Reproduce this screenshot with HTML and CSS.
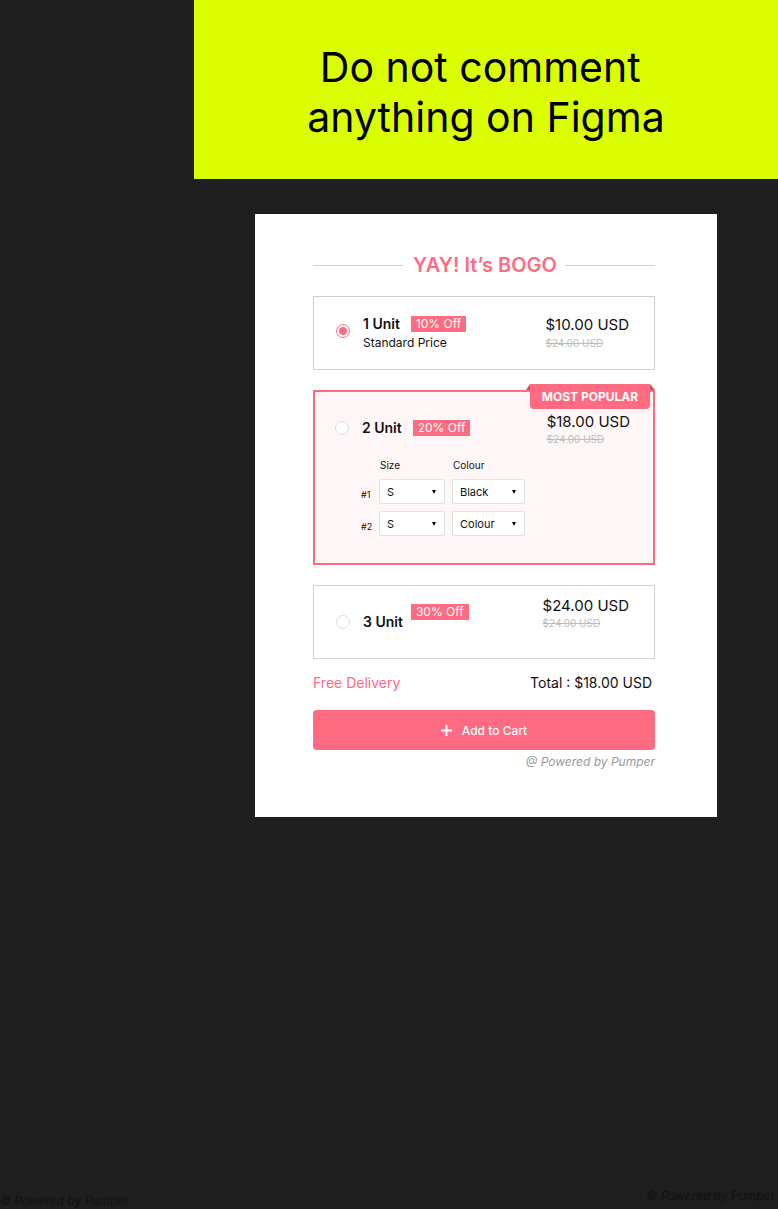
FILE: index.html
```html
<!DOCTYPE html>
<html lang="en">
<head>
<meta charset="UTF-8">
<meta name="viewport" content="width=device-width, initial-scale=1.0">
<title>BOGO Offer</title>
<link rel="stylesheet" href="styles.css">
</head>
<body>

<div class="canvas">
  <div class="note">
    <p>Do not comment&nbsp;<br>anything on Figma</p>
  </div>

  <div class="offer-card">
    <div class="offer-title">
      <span class="rule"></span>
      <h2>YAY! It’s BOGO</h2>
      <span class="rule"></span>
    </div>

    <div class="option option-one">
      <div class="option-left">
        <span class="radio checked"></span>
        <div class="option-info">
          <div class="name-row"><span class="unit">1 Unit</span><span class="badge">10% Off</span></div>
          <div class="sub">Standard Price</div>
        </div>
      </div>
      <div class="price">
        <div class="now">$10.00 USD</div>
        <div class="was">$24.00 USD</div>
      </div>
    </div>

    <div class="option option-two">
      <div class="ribbon">MOST POPULAR</div>
      <div class="top-row">
        <div class="option-left name-line">
          <span class="radio"></span>
          <span class="unit">2 Unit</span><span class="badge">20% Off</span>
        </div>
        <div class="price">
          <div class="now">$18.00 USD</div>
          <div class="was">$24.00 USD</div>
        </div>
      </div>
      <div class="variant-grid">
        <span></span>
        <span class="col-label">Size</span>
        <span class="col-label">Colour</span>

        <span class="row-label">#1</span>
        <div class="dropdown">S<span class="caret"></span></div>
        <div class="dropdown">Black<span class="caret"></span></div>

        <span class="row-label">#2</span>
        <div class="dropdown">S<span class="caret"></span></div>
        <div class="dropdown">Colour<span class="caret"></span></div>
      </div>
    </div>

    <div class="option option-three">
      <div class="option-left">
        <span class="radio"></span>
        <span class="unit">3 Unit</span><span class="badge raised">30% Off</span>
      </div>
      <div class="price">
        <div class="now">$24.00 USD</div>
        <div class="was">$24.00 USD</div>
      </div>
    </div>

    <div class="summary">
      <span class="delivery">Free Delivery</span>
      <span class="total">Total : $18.00 USD</span>
    </div>

    <button class="cart-btn">
      <svg width="11" height="11" viewBox="0 0 11 11"><path d="M5.5 0v11M0 5.5h11" stroke="#fff" stroke-width="1.8"/></svg>
      Add to Cart
    </button>
    <p class="powered">@ Powered by Pumper</p>
  </div>

  <div class="canvas-foot">
    <span class="foot-left">© Powered by Pumper</span>
    <span class="foot-right">© Powered by Pumper</span>
  </div>
</div>

</body>
</html>
```

FILE: styles.css
```css
body {
  margin: 0;
  background-color: #1e1e1e;
  font-family: 'Inter', 'Liberation Sans', sans-serif;
  color: #111;
}
.canvas {
  min-height: 1209px;
  display: flex;
  flex-direction: column;
}
.note {
  margin-left: 194px;
  height: 179px;
  background-color: #dbff00;
  display: flex;
  align-items: center;
  justify-content: center;
}
.note p {
  margin: 4px 0 0;
  font-size: 41px;
  line-height: 50px;
  text-align: center;
  color: #000;
}
.offer-card {
  margin: 35px 0 0 255px;
  width: 462px;
  box-sizing: border-box;
  height: 603px;
  background-color: #fff;
  padding: 39px 62px 0 58px;
}
.offer-title {
  display: flex;
  align-items: center;
  gap: 8px;
  margin-bottom: 19px;
}
.offer-title .rule {
  flex: 1;
  height: 1px;
  background-color: #cfcfcf;
}
.offer-title h2 {
  margin: 0 0 0 2px;
  font-size: 20px;
  line-height: 24px;
  font-weight: 600;
  color: #ff6b81;
}
.option {
  position: relative;
  border: 1px solid #cfcfcf;
  box-sizing: border-box;
  display: flex;
  align-items: center;
  justify-content: space-between;
  padding: 0 25px 0 22px;
  margin-bottom: 20px;
}
.option-one, .option-three {
  height: 74px;
}
.option-left {
  display: flex;
  align-items: center;
}
.radio {
  width: 14px;
  height: 14px;
  box-sizing: border-box;
  border: 1px solid #dcdcdc;
  border-radius: 50%;
  background-color: #fff;
  margin-right: 13px;
  flex-shrink: 0;
  position: relative;
}
.radio.checked {
  border-color: #ff6b81;
}
.radio.checked::after {
  content: '';
  position: absolute;
  left: 2px;
  top: 2px;
  width: 8px;
  height: 8px;
  border-radius: 50%;
  background-color: #ff6b81;
}
.option-one .radio {
  margin-top: -4px;
}
.name-row {
  display: flex;
  align-items: center;
  height: 18px;
}
.unit {
  font-size: 14px;
  font-weight: 600;
  line-height: 18px;
}
.badge {
  margin-left: 11px;
  background-color: #ff6b81;
  color: #fff;
  font-size: 12px;
  line-height: 16px;
  padding: 0 5px;
}
.badge.raised {
  margin-left: 8px;
  position: relative;
  top: -10px;
}
.sub {
  font-size: 12px;
  line-height: 16px;
  margin-top: 2px;
}
.price .now {
  font-size: 15px;
  font-weight: 400;
  line-height: 18px;
}
.price .was {
  font-size: 10px;
  line-height: 16px;
  color: #bdbdbd;
  text-decoration: line-through;
}
.option-one .price .was {
  margin-top: 1px;
}
.option-three .price {
  margin-bottom: 16px;
}

.option-two {
  display: block;
  border: 2px solid #ff6b81;
  background-color: #fff7f7;
  padding: 21px 23px 27px 20px;
  margin-bottom: 20px;
}
.ribbon {
  position: absolute;
  top: -8px;
  right: 3px;
  width: 120px;
  height: 25px;
  background-color: #ff6b81;
  color: #fff;
  font-size: 12px;
  font-weight: 700;
  line-height: 25px;
  text-align: center;
  border-radius: 0 0 4px 4px;
}
.ribbon::before, .ribbon::after {
  content: '';
  position: absolute;
  top: 0;
  width: 0;
  height: 0;
  border-bottom: 6px solid #d9465d;
}
.ribbon::before {
  left: -4px;
  border-left: 4px solid transparent;
}
.ribbon::after {
  right: -5px;
  border-right: 5px solid transparent;
}
.top-row {
  display: flex;
  justify-content: space-between;
  align-items: flex-start;
}
.name-line {
  margin-top: 6px;
  height: 18px;
}
.variant-grid {
  margin: 11px 0 0 26px;
  display: grid;
  grid-template-columns: 11px 66px 73px;
  grid-template-rows: 14px 25px 25px;
  column-gap: 7px;
  row-gap: 7px;
  font-size: 10px;
}
.col-label {
  line-height: 14px;
  padding-left: 1px;
}
.row-label {
  align-self: center;
  padding-top: 5px;
  font-size: 9px;
  white-space: nowrap;
}
.dropdown {
  background-color: #fff;
  border: 1px solid #e2e2e2;
  border-radius: 2px;
  display: flex;
  align-items: center;
  justify-content: space-between;
  padding: 0 8px 0 7px;
  font-size: 11px;
}
.caret {
  width: 0;
  height: 0;
  border-left: 2.5px solid transparent;
  border-right: 2.5px solid transparent;
  border-top: 4px solid #000;
}
.option-three {
  margin-bottom: 15px;
}

.summary {
  display: flex;
  justify-content: space-between;
  font-size: 14px;
  line-height: 17px;
}
.delivery {
  color: #ff6b81;
}
.total {
  padding-right: 3px;
}
.cart-btn {
  margin-top: 19px;
  width: 100%;
  height: 40px;
  border: none;
  border-radius: 4px;
  background-color: #ff6b81;
  color: #fff;
  font-family: inherit;
  font-size: 12px;
  font-weight: 500;
  display: flex;
  align-items: center;
  justify-content: center;
  gap: 10px;
  cursor: pointer;
}
.powered {
  margin: 4px 0 0;
  text-align: right;
  font-size: 12px;
  line-height: 16px;
  font-style: italic;
  color: #9a9a9a;
}
.canvas-foot {
  margin-top: auto;
  height: 20px;
  display: flex;
  justify-content: space-between;
  align-items: flex-start;
  font-size: 12px;
  line-height: 14px;
  font-style: italic;
  color: #111;
}
.foot-left {
  margin-top: 5px;
}
.foot-right {
  padding-right: 3px;
}
```
